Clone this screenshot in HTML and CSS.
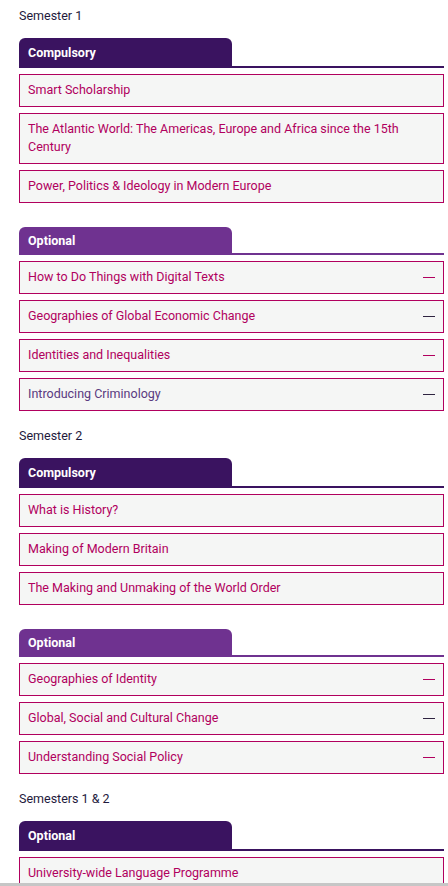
FILE: index.html
```html
<!DOCTYPE html>
<html lang="en">
<head>
<meta charset="utf-8">
<title>Modules</title>
<link rel="stylesheet" href="styles.css">
</head>
<body>
<div class="page">
  <section class="semester">
    <h2 class="semester-title">Semester 1</h2>
    <div class="group">
      <div class="tab-row"><div class="tab tab-dark">Compulsory</div></div>
      <ul class="modules">
        <li class="module">Smart Scholarship</li>
        <li class="module">The Atlantic World: The Americas, Europe and Africa since the 15th Century</li>
        <li class="module">Power, Politics &amp; Ideology in Modern Europe</li>
      </ul>
    </div>
    <div class="group">
      <div class="tab-row tab-row-light"><div class="tab tab-light">Optional</div></div>
      <ul class="modules">
        <li class="module has-toggle"><span>How to Do Things with Digital Texts</span><span class="minus"></span></li>
        <li class="module has-toggle"><span>Geographies of Global Economic Change</span><span class="minus minus-dark"></span></li>
        <li class="module has-toggle"><span>Identities and Inequalities</span><span class="minus"></span></li>
        <li class="module has-toggle visited"><span>Introducing Criminology</span><span class="minus minus-dark"></span></li>
      </ul>
    </div>
  </section>

  <section class="semester">
    <h2 class="semester-title">Semester 2</h2>
    <div class="group">
      <div class="tab-row"><div class="tab tab-dark">Compulsory</div></div>
      <ul class="modules">
        <li class="module">What is History?</li>
        <li class="module">Making of Modern Britain</li>
        <li class="module">The Making and Unmaking of the World Order</li>
      </ul>
    </div>
    <div class="group">
      <div class="tab-row tab-row-light"><div class="tab tab-light">Optional</div></div>
      <ul class="modules">
        <li class="module has-toggle"><span>Geographies of Identity</span><span class="minus"></span></li>
        <li class="module has-toggle"><span>Global, Social and Cultural Change</span><span class="minus minus-dark"></span></li>
        <li class="module has-toggle"><span>Understanding Social Policy</span><span class="minus"></span></li>
      </ul>
    </div>
  </section>

  <section class="semester">
    <h2 class="semester-title">Semesters 1 &amp; 2</h2>
    <div class="group">
      <div class="tab-row"><div class="tab tab-dark">Optional</div></div>
      <ul class="modules">
        <li class="module">University-wide Language Programme</li>
      </ul>
    </div>
  </section>
</div>
<div class="hscroll"></div>
</body>
</html>
```

FILE: styles.css
```css
* { box-sizing: border-box; }
html, body { margin: 0; padding: 0; background: #ffffff; }
body {
  font-family: Roboto, "Liberation Sans", sans-serif;
  font-size: 12.5px;
  color: #1c1838;
  overflow: hidden;
}
.page {
  width: 444px;
  padding: 7px 0 0 19px;
  display: flex;
  flex-direction: column;
  gap: 16px;
}
.semester {
  display: flex;
  flex-direction: column;
  gap: 24px;
}
.semester-title {
  margin: 0 0 -11px;
  font-size: 12.5px;
  font-weight: 400;
  line-height: 18px;
  color: #1e1a3c;
}
.group {
  display: flex;
  flex-direction: column;
  gap: 6px;
}
.tab-row {
  border-bottom: 2px solid #3a1360;
}
.tab-row-light { border-bottom-color: #6f3290; }
.tab {
  width: 50%;
  height: 28px;
  padding: 0 9px;
  display: flex;
  align-items: center;
  border-radius: 6px 6px 0 0;
  color: #ffffff;
  font-weight: 700;
  font-size: 12.5px;
}
.tab-dark { background: #3a1360; }
.tab-light { background: #6f3290; height: 26px; }
.modules {
  list-style: none;
  margin: 0;
  padding: 0;
  display: flex;
  flex-direction: column;
  gap: 6px;
}
.module {
  border: 1px solid #b1005e;
  background: #f5f6f5;
  color: #b1005e;
  padding: 6px 8px 7px;
  line-height: 18px;
}
.has-toggle {
  display: flex;
  align-items: center;
  justify-content: space-between;
}
.visited { color: #5a3a80; }
.minus {
  width: 12px;
  height: 1px;
  background: #b1005e;
  flex: none;
}
.minus-dark { background: #2e2440; }
.hscroll {
  position: fixed;
  left: 0;
  right: 0;
  bottom: 0;
  height: 3px;
  background: #c6c6c6;
}
```
